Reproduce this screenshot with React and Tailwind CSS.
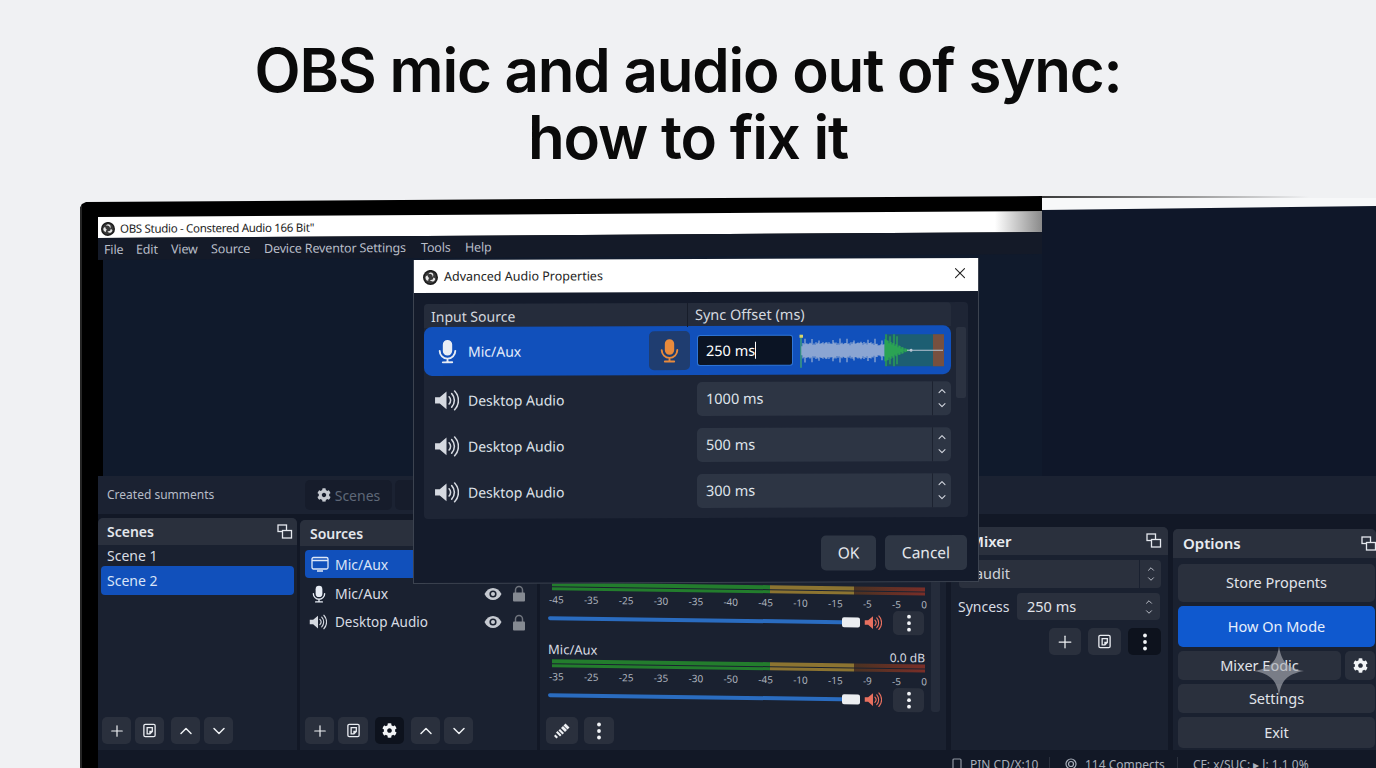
import React from "react";
import { FaCog } from "react-icons/fa";
import { Plus, ChevronUp, ChevronDown, X } from "lucide-react";

const ui = { fontFamily: '"Noto Sans", "Open Sans", sans-serif' };

function Logo({ size = 16 }) {
  return (
    <svg width={size} height={size} viewBox="0 0 24 24" className="shrink-0">
      <circle cx="12" cy="12" r="12" fill="#1c1c1c" />
      <circle cx="12" cy="12" r="9.5" fill="#3a3a3a" />
      <path d="M12 4a4.5 4.5 0 0 1 4.5 4.5c0 1-.4 2-1 2.7a4.6 4.6 0 0 0-6.8-4.4A4.4 4.4 0 0 1 12 4zM19.6 14.5a4.5 4.5 0 0 1-6.6 3.4 4.4 4.4 0 0 1-1.8-2 4.6 4.6 0 0 0 5.6-3.9 4.4 4.4 0 0 1 2.8 2.5zM4.6 14.7a4.5 4.5 0 0 1 2.6-6.2c.3 2.300 1.700 3.900 3 4.500-1.500 1-1.900 3-1.700 4.200a4.400 4.400 0 0 1-3.900-2.500z" fill="#e8e8e8" />
    </svg>
  );
}

function Mic({ size = 20, color = "#e8edf5", className = "" }) {
  return (
    <svg width={size} height={size} viewBox="0 0 24 24" className={"shrink-0 " + className}>
      <rect x="7.500" y="1" width="9" height="15" rx="4.500" fill={color} />
      <path d="M4.500 11.500a7.500 7.500 0 0 0 15 0M12 19v3M7.500 22.500h9" fill="none" stroke={color} strokeWidth="1.800" strokeLinecap="round" />
    </svg>
  );
}

function Speaker({ size = 24, color = "#d5d9e0", className = "" }) {
  return (
    <svg width={size} height={size} viewBox="0 0 24 24" className={"shrink-0 " + className}>
      <path d="M1 9h4.500L12 3.500v17L5.500 15H1z" fill={color} />
      <path d="M14.500 8.500a5 5 0 0 1 0 7M17 5.500a9.500 9.500 0 0 1 0 13M19.800 3a13 13 0 0 1 0 18" fill="none" stroke={color} strokeWidth="1.500" strokeLinecap="round" />
    </svg>
  );
}

function DockIcon() {
  return (
    <svg width="16" height="16" viewBox="0 0 16 16" className="shrink-0" fill="none" stroke="#e5e8ee" strokeWidth="1.300">
      <rect x="1" y="1" width="8.500" height="6.500" />
      <rect x="5.500" y="6.500" width="9" height="7.500" fill="#2a303d" />
    </svg>
  );
}

function FilterIcon() {
  return (
    <svg width="15" height="15" viewBox="0 0 16 16" fill="none" stroke="#e8ebf0" strokeWidth="1.400">
      <rect x="2" y="1.500" width="12" height="13" rx="1.500" />
      <path d="M5.500 5h5.500v4l-2.500 2.500H5.500zM11 9H8.500v2.500" />
    </svg>
  );
}

function Dots({ className = "" }) {
  return (
    <svg width="6" height="18" viewBox="0 0 6 18" className={className} fill="#f2f4f7">
      <circle cx="3" cy="2.500" r="1.900" />
      <circle cx="3" cy="9" r="1.900" />
      <circle cx="3" cy="15.500" r="1.900" />
    </svg>
  );
}

function Eye() {
  return (
    <svg width="18" height="14" viewBox="0 0 18 14">
      <path d="M0.500 7C2.500 3 5.500 1 9 1s6.500 2 8.500 6c-2 4-5 6-8.500 6S2.500 11 0.500 7z" fill="#c6cad1" />
      <circle cx="9" cy="7" r="3.600" fill="#1a2130" />
      <circle cx="9" cy="7" r="2" fill="#c6cad1" />
    </svg>
  );
}

function Lock() {
  return (
    <svg width="14" height="17" viewBox="0 0 14 17">
      <path d="M3.500 8V5a3.500 3.500 0 0 1 7 0v3" fill="none" stroke="#70757e" strokeWidth="1.500" />
      <rect x="1" y="7.500" width="12" height="9" rx="1" fill="#858a92" />
    </svg>
  );
}

function ToolBtn({ children, w = "w-[29px]", dark = false }) {
  return (
    <div className={`${w} h-[27px] rounded-[5px] flex items-center justify-center shrink-0 ${dark ? "bg-[#0d121d]" : "bg-[#2a303d]"}`}>
      {children}
    </div>
  );
}

function Wave() {
  const bars = [];
  for (let i = 0; i < 83; i++) {
    const h = 4.500 + 2.500 * Math.abs(Math.sin(i * 1.7)) + 1.500 * Math.abs(Math.sin(i * 0.53)) + (i % 7 === 3 ? 3.500 : 0) + (i > 74 ? -1.500 : 0);
    bars.push(<line key={i} x1={3 + i} x2={3 + i} y1={18 - h} y2={18 + h} stroke="#b4c1da" strokeWidth="1" />);
  }
  const green = [];
  const spikes = { 1: 16, 5: 14, 9: 16, 12: 14 };
  for (let i = 0; i < 24; i++) {
    const h = spikes[i] || Math.max(1, 11 - i * 0.450) - (i % 3 === 1 ? 2 : 0);
    green.push(<line key={i} x1={86 + i} x2={86 + i} y1={18 - h} y2={18 + h} stroke="#31ba4a" strokeWidth="1" />);
  }
  return (
    <svg width="146" height="36" viewBox="0 0 146 36" className="shrink-0">
      <rect x="86" y="2" width="59" height="32" fill="#1d5e72" />
      <rect x="134" y="2" width="11" height="32" fill="#77503f" />
      <line x1="2" x2="2" y1="2" y2="35" stroke="#49b06a" strokeWidth="1.200" />
      <rect x="0.500" y="2" width="3.500" height="3" fill="#d9d46a" />
      {bars}
      {green}
      <line x1="108" x2="144" y1="18" y2="18" stroke="#b9c6d4" strokeWidth="1" />
      <circle cx="112" cy="18" r="1.500" fill="#b9c6d4" />
    </svg>
  );
}

function Spin({ label }) {
  return (
    <div className="h-[34px] ml-[273px] w-[254px] bg-[#2d3544] rounded-[5px] flex items-center shrink-0">
      <span className="flex-1 pl-[9px] text-[14.500px] text-[#dfe3ea]">{label}</span>
      <div className="w-[19px] h-full border-l border-[#1c2230] flex flex-col items-center justify-center text-[#d6dae2]">
        <ChevronUp size={12} strokeWidth={2} />
        <ChevronDown size={12} strokeWidth={2} className="mt-[2px]" />
      </div>
    </div>
  );
}

function DesktopRow({ label, mt }) {
  return (
    <div className={`relative flex items-center ${mt}`}>
      <div className="absolute left-[10px] top-[5px] flex items-center gap-[9px] text-[14px] text-[#dfe3ea]">
        <Speaker size={25} />
        <span>Desktop Audio</span>
      </div>
      <Spin label={label} />
    </div>
  );
}

function Meter({ labels }) {
  return (
    <div className="pl-[12px] pr-[21px]">
      <div className="flex flex-col gap-[1px]">
        {[0, 1].map((r) => (
          <div key={r} className="flex h-[3.500px]">
            <div className="w-[58.500%] bg-[#237d2d]" />
            <div className="w-[22.500%] bg-[#8c7431]" />
            <div className="flex-1 bg-[linear-gradient(90deg,#4a3222,#7a2e28)]" />
          </div>
        ))}
      </div>
      <div className="flex justify-between text-[10px] leading-[14px] text-[#aeb4bf] mt-[2px] ml-[-3px] mr-[-2px]">
        {labels.map((l, i) => (
          <span key={i}>{l}</span>
        ))}
      </div>
    </div>
  );
}

function Fader() {
  return (
    <div className="flex items-center pl-[8px] pr-[22px]">
      <div className="relative flex-1 h-[4px] rounded-full bg-[#2a6cc0]">
        <div className="absolute right-[-2px] top-[-3px] w-[18px] h-[10px] rounded-[2px] bg-[#eceef1]" />
      </div>
      <Speaker size={18} color="#e8705f" className="ml-[6px]" />
      <div className="w-[31px] h-[24px] ml-[11px] rounded-[5px] bg-[#2a303d] flex items-center justify-center">
        <Dots />
      </div>
    </div>
  );
}

function OptBtn({ children, h, blue }) {
  return (
    <div className={`${h} rounded-[5px] flex items-center justify-center text-[14.500px] ${blue ? "bg-[#0f59cf] text-[#e6eefb]" : "bg-[#2a303d] text-[#e1e4ea]"}`}>
      {children}
    </div>
  );
}

export default function App() {
  return (
    <div className="relative w-[1376px] h-[768px] overflow-hidden bg-[#f0f1f3]" style={ui}>
      <div className="h-[196px] pt-[37px] text-center text-[60px] leading-[67px] font-semibold tracking-[-0.020em] text-[#0a0a0a]" style={{ fontFamily: "Inter, sans-serif" }}>
        <div>OBS mic and audio out of sync:</div>
        <div>how to fix it</div>
      </div>

      <div className="ml-[80px] h-[572px] bg-black border-l-2 border-[#262626] pl-[16px] flex flex-col [clip-path:polygon(0_12px,2px_8px,6px_6px,962px_0,100%_0,100%_100%,0_100%)]">
        <div className="h-[280px] flex shrink-0">
          <div className="w-[944px] flex flex-col pt-[21px] shrink-0">
            <div className="h-[21px] flex items-center gap-[5px] pl-[3px] pt-[2px] text-[11.500px] tracking-[-0.300px] text-[#222] bg-[linear-gradient(90deg,#fff_0%,#fff_95%,#8a8a8a_100%)] origin-top-left skew-y-[-0.360deg]">
              <Logo size={14} />
              <span>OBS Studio - Constered Audio 166 Bit"</span>
            </div>
            <div className="h-[22px] flex items-center pl-[6px] pt-[3px] text-[12.500px] tracking-[-0.150px] text-[#b9bec8] bg-[#141a28] origin-top-left skew-y-[-0.360deg]">
              <span className="w-[32px]">File</span>
              <span className="w-[35px]">Edit</span>
              <span className="w-[40px]">View</span>
              <span className="w-[53px]">Source</span>
              <span className="w-[157px]">Device Reventor Settings</span>
              <span className="w-[44px]">Tools</span>
              <span>Help</span>
            </div>
            <div className="flex-1 mt-[-6px] ml-[5px] bg-[#101a2c]" />
          </div>
          <div className="flex-1 bg-[#0f1729] flex flex-col">
            <div className="h-[14px] bg-[#f7f8f9] [clip-path:polygon(0_0,100%_0,100%_72%,0_100%)]">
              <div className="h-[2px] bg-[linear-gradient(90deg,#3a3a3a,#9a9a9a_45%,#f0f1f3_80%)]" />
            </div>
          </div>
        </div>

        <div className="h-[38px] bg-[#1b2232] flex items-center pl-[9px] shrink-0">
          <span className="w-[198px] text-[12px] text-[#b6bcc7]">Created summents</span>
          <div className="w-[87px] h-[30px] bg-[#161c2b] rounded-[5px] flex items-center justify-center gap-[4px] text-[14px] text-[#5f6878]">
            <FaCog size={14} color="#c5c9d0" />
            <span>Scenes</span>
          </div>
          <div className="w-[60px] h-[30px] ml-[3px] bg-[#161c2b] rounded-[5px]" />
        </div>

        <div className="h-[236px] flex bg-[#121826] shrink-0 gap-[3px]">
          <section className="w-[199px] mt-[4px] flex flex-col bg-[#1a2130] rounded-t-[5px] relative shrink-0">
            <div className="h-[27px] bg-[#2a303d] rounded-t-[5px] flex items-center justify-between pl-[9px] pr-[4px] text-[14px] font-semibold text-[#e4e7ec] shrink-0">
              <span>Scenes</span>
              <DockIcon />
            </div>
            <div className="pl-[9px] text-[14px] leading-[20px] mt-[1px] h-[20px] text-[#d8dce3]">Scene 1</div>
            <div className="mx-[3px] h-[29px] rounded-[4px] bg-[#1150bb] flex items-center pl-[6px] text-[14px] text-[#d9e4f7]">Scene 2</div>
            <div className="flex-1" />
            <div className="flex pl-[4px] pb-[6px]">
              <ToolBtn><Plus size={18} color="#eef0f3" strokeWidth={1.600} /></ToolBtn>
              <span className="ml-[4px]"><ToolBtn><FilterIcon /></ToolBtn></span>
              <span className="ml-[7px]"><ToolBtn><ChevronUp size={20} color="#eef0f3" strokeWidth={1.800} /></ToolBtn></span>
              <span className="ml-[4px]"><ToolBtn><ChevronDown size={20} color="#eef0f3" strokeWidth={1.800} /></ToolBtn></span>
            </div>
          </section>

          <section className="w-[237px] mt-[6px] flex flex-col bg-[#1a2130] rounded-t-[5px] shrink-0">
            <div className="h-[26px] bg-[#2a303d] rounded-t-[5px] flex items-center pl-[10px] text-[14px] font-semibold text-[#e4e7ec] shrink-0">Sources</div>
            <div className="mx-[5px] mt-[4px] h-[28px] rounded-[4px] bg-[#1150bb] flex items-center pl-[6px] gap-[6px] text-[14px] text-[#d9e4f7]">
              <svg width="18" height="16" viewBox="0 0 18 16" fill="none" stroke="#dfe8f7" strokeWidth="1.300"><rect x="1" y="1.500" width="16" height="11.500" rx="1.500" /><path d="M1 4.500h16M6 15h6" /></svg>
              <span>Mic/Aux</span>
            </div>
            <div className="h-[29px] mt-[1px] flex items-center pl-[10px] pr-[11px] text-[14px] text-[#d8dce3]">
              <Mic size={18} />
              <span className="ml-[7px] flex-1">Mic/Aux</span>
              <Eye />
              <span className="ml-[10px]"><Lock /></span>
            </div>
            <div className="h-[28px] flex items-center pl-[9px] pr-[11px] text-[13.500px] text-[#d8dce3]">
              <Speaker size={18} />
              <span className="ml-[8px] flex-1">Desktop Audio</span>
              <Eye />
              <span className="ml-[10px]"><Lock /></span>
            </div>
            <div className="flex-1" />
            <div className="flex pl-[5px] pb-[6px]">
              <ToolBtn><Plus size={18} color="#eef0f3" strokeWidth={1.600} /></ToolBtn>
              <span className="ml-[4px]"><ToolBtn w="w-[30px]"><FilterIcon /></ToolBtn></span>
              <span className="ml-[7px]"><ToolBtn dark><FaCog size={15} color="#f2f4f7" /></ToolBtn></span>
              <span className="ml-[7px]"><ToolBtn><ChevronUp size={20} color="#eef0f3" strokeWidth={1.800} /></ToolBtn></span>
              <span className="ml-[4px]"><ToolBtn><ChevronDown size={20} color="#eef0f3" strokeWidth={1.800} /></ToolBtn></span>
            </div>
          </section>

          <section className="w-[406px] mt-[6px] flex flex-col bg-[#1a2130] rounded-t-[5px] relative shrink-0">
            <div className="absolute right-[6px] top-[40px] bottom-[38px] w-[9px] rounded-[3px] bg-[#252c3b]" />
            <div className="h-[62px] shrink-0" />
            <div className="origin-left skew-y-[0.800deg]">
              <Meter labels={["-45", "-35", "-25", "-30", "-35", "-40", "-45", "-10", "-15", "-5", "-5", "0"]} />
              <Fader />
            </div>
            <div className="origin-left skew-y-[0.800deg] mt-[9px]">
              <div className="flex justify-between items-end pl-[8px] pr-[21px] text-[13px] leading-[14px] text-[#d8dce3] h-[20px]">
                <span className="mb-[3px]">Mic/Aux</span>
                <span className="text-[12px] mb-[-1px]">0.0 dB</span>
              </div>
              <Meter labels={["-35", "-25", "-25", "-35", "-30", "-50", "-45", "-10", "-15", "-9", "-5", "0"]} />
              <Fader />
            </div>
            <div className="flex-1" />
            <div className="flex gap-[6px] pl-[6px] pb-[6px]">
              <ToolBtn w="w-[32px]">
                <svg width="18" height="18" viewBox="0 0 18 18" fill="#eef0f3"><path d="M10.500 3.500l2-2 4 4-2 2zM8 6l2-2 4 4-2 2zM5.500 8.500l1.500-1.500 4 4-1.500 1.500zM3 10.500l1.500-1.500 4 4L7 14.500zM1 14l1.500-1.500L5 15l-1.500 1.500z" /></svg>
              </ToolBtn>
              <ToolBtn w="w-[30px]"><Dots /></ToolBtn>
            </div>
          </section>

          <section className="w-[217px] ml-[2px] mt-[13px] flex flex-col bg-[#1a2130] rounded-t-[5px] shrink-0">
            <div className="h-[28px] bg-[#2a303d] rounded-t-[5px] flex items-center justify-between pl-[19px] pr-[6px] text-[15px] font-semibold text-[#e8ebf0] shrink-0">
              <span>Mixer</span>
              <DockIcon />
            </div>
            <div className="ml-[8px] mr-[7px] mt-[5px] h-[28px] bg-[#2a303d] rounded-[4px] flex items-center text-[14.500px] text-[#cfd3da]">
              <span className="flex-1 pl-[12px]">.audit</span>
              <div className="w-[22px] h-full border-l border-[#1a2130] flex flex-col items-center justify-center text-[#d6dae2]">
                <ChevronUp size={10} strokeWidth={2} />
                <ChevronDown size={10} strokeWidth={2} />
              </div>
            </div>
            <div className="flex items-center mt-[5px] ml-[7px] mr-[8px]">
              <span className="w-[59px] text-[14px] text-[#d8dce3]">Syncess</span>
              <div className="flex-1 h-[27px] bg-[#2a303d] rounded-[4px] flex items-center pl-[10px] text-[14.500px] text-[#e1e4ea]">
                <span className="flex-1">250 ms</span>
                <div className="w-[22px] flex flex-col items-center text-[#d6dae2]">
                  <ChevronUp size={10} strokeWidth={2} />
                  <ChevronDown size={10} strokeWidth={2} />
                </div>
              </div>
            </div>
            <div className="flex justify-end gap-[7px] mr-[7px] mt-[8px]">
              <ToolBtn w="w-[32px]"><Plus size={20} color="#eef0f3" strokeWidth={1.500} /></ToolBtn>
              <ToolBtn w="w-[33px]"><FilterIcon /></ToolBtn>
              <ToolBtn w="w-[33px]" dark><Dots /></ToolBtn>
            </div>
          </section>

          <section className="flex-1 ml-[2px] mt-[15px] flex flex-col bg-[#1a2130] rounded-t-[5px] min-w-0">
            <div className="h-[29px] bg-[#2a303d] rounded-t-[5px] flex items-center justify-between pl-[10px] text-[15px] font-semibold text-[#e8ebf0] shrink-0">
              <span>Options</span>
              <span className="mr-[-1px]"><DockIcon /></span>
            </div>
            <div className="flex flex-col gap-[4px] pl-[5px] pt-[6px] pr-[1px]">
              <OptBtn h="h-[38px]">Store Propents</OptBtn>
              <OptBtn h="h-[41px]" blue>How On Mode</OptBtn>
              <div className="flex gap-[4px] h-[29px]">
                <div className="flex-1 bg-[#2a303d] rounded-[5px] flex items-center justify-center text-[14.500px] text-[#e1e4ea]">Mixer Eodic</div>
                <div className="w-[30px] bg-[#2a303d] rounded-[5px] flex items-center justify-center"><FaCog size={15} color="#f2f4f7" /></div>
              </div>
              <OptBtn h="h-[29px]">Settings</OptBtn>
              <OptBtn h="h-[31px]">Exit</OptBtn>
            </div>
          </section>
        </div>

        <div className="h-[18px] bg-[#121826] shrink-0 flex items-start pl-[854px] pt-[7px] text-[12px] leading-[16px] text-[#a9afba] overflow-hidden whitespace-nowrap">
          <svg width="10" height="12" viewBox="0 0 10 12" className="mr-[8px] mt-[1px]" fill="none" stroke="#8f95a0" strokeWidth="1.200"><rect x="1" y="1" width="8" height="10" rx="1" /></svg>
          <span className="w-[79px]">PIN CD/X:10</span>
          <span className="w-[1px] h-[12px] bg-[#2a303d] mr-[15px]" />
          <svg width="12" height="12" viewBox="0 0 12 12" className="mr-[8px] mt-[1px]" fill="none" stroke="#a9afba" strokeWidth="1.200"><circle cx="6" cy="6" r="5" /><circle cx="6" cy="6" r="2.500" /></svg>
          <span className="w-[92px]">114 Compects</span>
          <span className="w-[1px] h-[12px] bg-[#2a303d] mr-[15px]" />
          <span>CF: x/SUC: ▸ l: 1.1 0%</span>
        </div>
      </div>

      {/* Dialog */}
      <div className="absolute left-[413px] top-[260px] w-[566px] h-[324px] flex flex-col bg-[#141b2b] border-x border-b border-[#3c4350] origin-top-left skew-y-[-0.200deg]">
        <div className="h-[33px] bg-white flex items-center pl-[9px] pr-[9px] pt-[2px] text-[12.500px] text-[#222] shrink-0">
          <Logo size={15} />
          <span className="ml-[6px] flex-1">Advanced Audio Properties</span>
          <X size={18} strokeWidth={1.500} color="#222" className="mt-[-5px]" />
        </div>
        <div className="relative mx-[10px] mt-[11px] h-[215px] bg-[#1e2535] rounded-[4px] shrink-0">
          <div className="flex h-[24px] items-center text-[#d4d8df] bg-[#252c3b] w-[527px] rounded-t-[4px]">
            <span className="w-[264px] pl-[7px] h-full flex items-center border-r border-[#171d2a] text-[14px]">Input Source</span>
            <span className="pl-[7px] text-[14.500px]">Sync Offset (ms)</span>
          </div>
          <div className="h-[49px] w-[527px] rounded-[8px] bg-[#1150bb] flex items-center pl-[11px] pr-[6px] text-[14px] text-[#e6eefb] mt-[-1px]">
            <Mic size={25} />
            <span className="ml-[8px] flex-1">Mic/Aux</span>
            <div className="w-[41px] h-[39px] rounded-[5px] bg-[#1f3d70] flex items-center justify-center">
              <Mic size={25} color="#e88a3c" />
            </div>
            <div className="w-[96px] h-[31px] ml-[7px] bg-[#0b1424] border border-[#2f76d8] rounded-[3px] flex items-center pl-[8px] text-[14.500px] text-white">
              <span>250 ms</span>
              <span className="w-[1px] h-[17px] bg-white" />
            </div>
            <span className="ml-[6px]"><Wave /></span>
          </div>
          <DesktopRow label="1000 ms" mt="mt-[7px]" />
          <DesktopRow label="500 ms" mt="mt-[12px]" />
          <DesktopRow label="300 ms" mt="mt-[12px]" />
          <div className="absolute right-[2px] top-[25px] w-[10px] h-[71px] rounded-[2px] bg-[#2b3241]" />
        </div>
        <div className="flex justify-end gap-[9px] mr-[11px] mt-[18px] text-[15.500px] text-[#e4e7ec]">
          <div className="w-[55px] h-[35px] bg-[#2e3644] rounded-[5px] flex items-center justify-center">OK</div>
          <div className="w-[82px] h-[35px] bg-[#2e3644] rounded-[5px] flex items-center justify-center">Cancel</div>
        </div>
      </div>

      {/* Watermark sparkle */}
      <svg width="50" height="50" viewBox="0 0 50 50" className="absolute left-[1254px] top-[646px]">
        <path d="M25 0C27 15 33 22 50 25 33 28 27 35 25 50 23 35 17 28 0 25 17 22 23 15 25 0z" fill="#a9adb5" fillOpacity="0.620" />
      </svg>
    </div>
  );
}
